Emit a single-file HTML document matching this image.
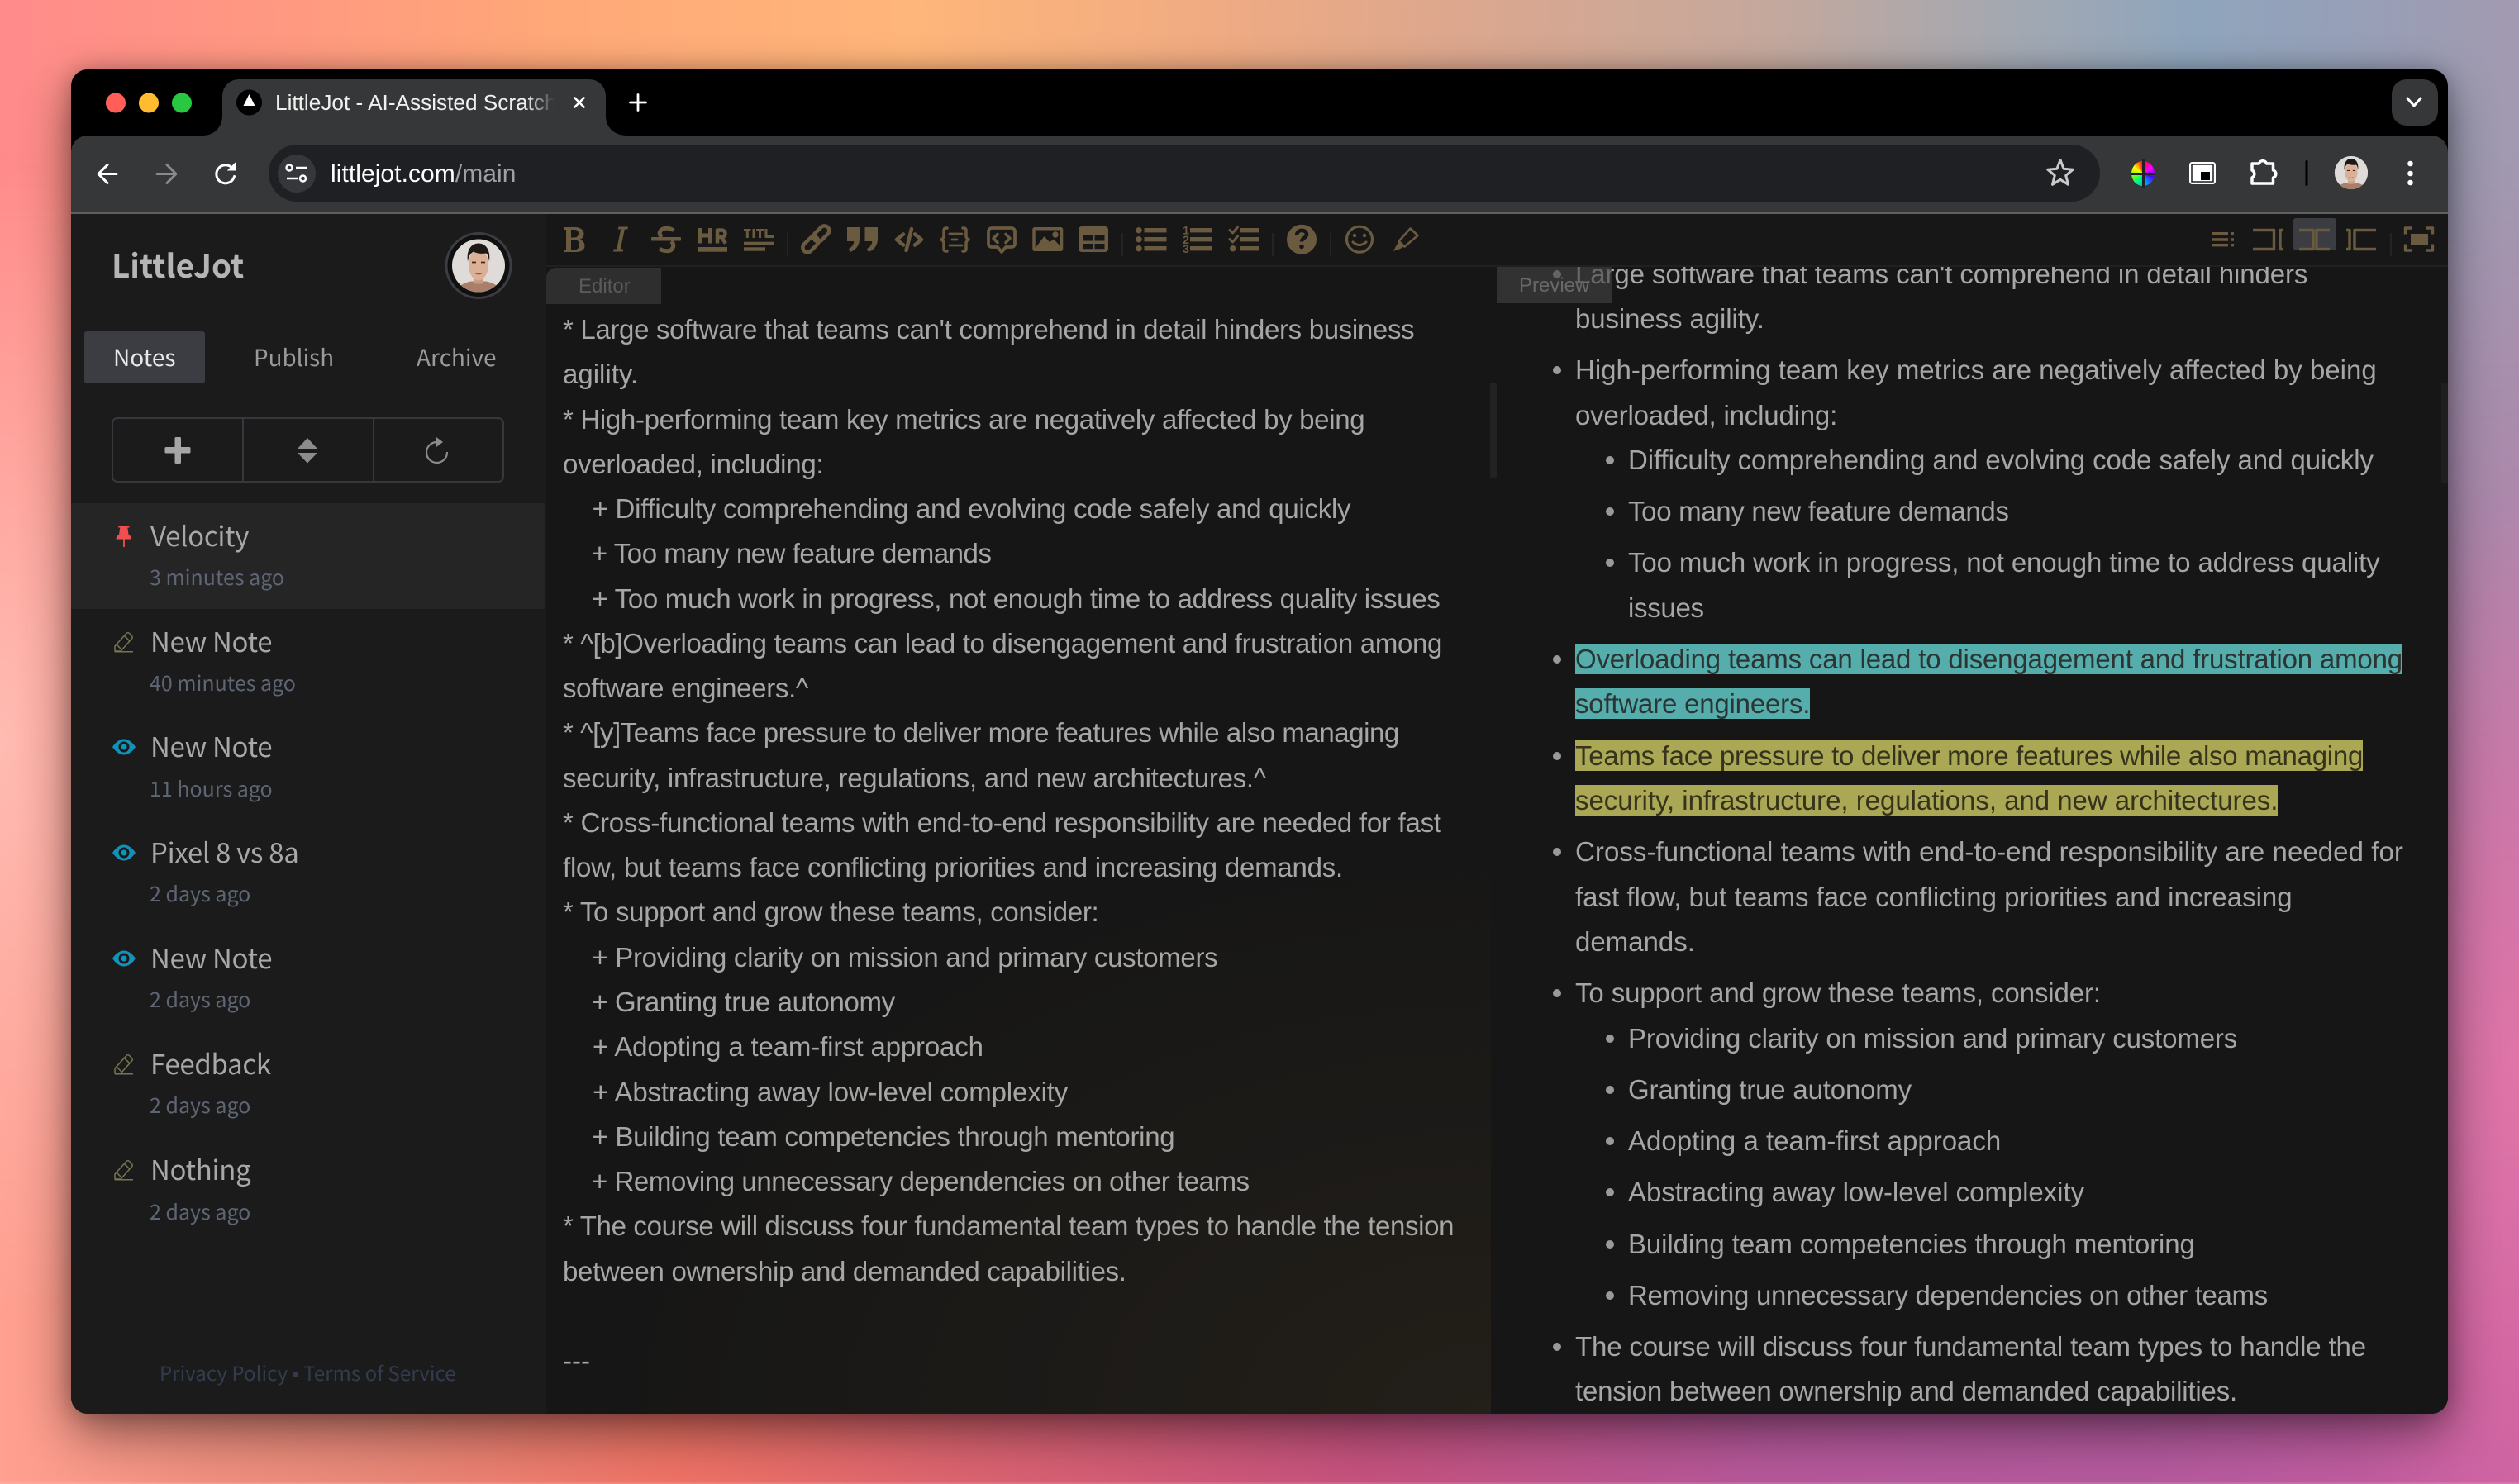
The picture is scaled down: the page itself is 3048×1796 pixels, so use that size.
<!DOCTYPE html>
<html lang="en"><head><meta charset="utf-8"><title>LittleJot - AI-Assisted Scratchpad</title>
<style>
html,body{margin:0;padding:0;width:3048px;height:1796px;overflow:hidden;background:#e88}
*{box-sizing:border-box}
.bg,.bg2,.bg3{position:absolute;left:0;top:0;width:3048px;height:1796px}
.bg{background:linear-gradient(90deg,#ff8b8b 0%,#ff9a80 12%,#ffa878 22%,#ffb67a 36%,#f0ab82 48%,#dca78e 58%,#c5a89c 70%,#a3a8b2 80%,#8fa5bc 87%,#96a0b8 93%,#a29ab0 100%)}
.bg2{background:linear-gradient(90deg,#ffa090 0%,#f09080 8%,#e98878 15%,#ee7265 27%,#dc6470 38%,#c5527e 54%,#b5589a 70%,#b45a9e 85%,#c75ea0 100%);-webkit-mask-image:linear-gradient(180deg,transparent 10%,#000 90%);mask-image:linear-gradient(180deg,transparent 10%,#000 90%)}
.bg3{background:radial-gradient(ellipse 260px 700px at 0 50%,rgba(255,200,190,.75),rgba(255,200,190,0)),radial-gradient(ellipse 260px 700px at 100% 72%,rgba(232,118,168,.8),rgba(232,118,168,0))}
.win{position:absolute;left:86px;top:84px;width:2876px;height:1627px;border-radius:20px;overflow:hidden;background:#000;box-shadow:0 22px 60px rgba(0,0,0,.48),0 0 24px rgba(0,0,0,.22)}
.in{position:absolute;left:-86px;top:-84px;width:3048px;height:1796px}
.a{position:absolute;white-space:nowrap}
.lib{font-family:"Liberation Sans",Arial,sans-serif}
.s{font-family:"Noto Sans CJK JP","DejaVu Sans",sans-serif}
svg{position:absolute;left:0;top:0;overflow:visible}
.bar{left:86px;top:164px;width:2876px;height:92px;background:#363738;border-radius:20px 20px 0 0}
.line{left:86px;top:256px;width:2876px;height:3px;background:#606060}
.omni{left:325px;top:175px;width:2216px;height:69px;border-radius:35px;background:#1f2023}
.side{left:86px;top:259px;width:575px;height:1452px;background:#1b1b1b}
.main{left:661px;top:259px;width:2301px;height:1452px;background:#161616}
.edit{left:661px;top:322px;width:1143px;height:1389px;background:radial-gradient(ellipse 1100px 700px at 100% 100%,#231f19,rgba(35,31,25,0)),#161616;border-radius:0 0 0 10px}
.tb{left:661px;top:259px;width:2301px;height:64px;background:#171717;border-bottom:2px solid #202020}
.etxt{left:681px;top:372px;font-size:33px;line-height:54.27px;color:#a6a6a6;white-space:pre}
.prev{position:absolute;left:1804px;top:323px;width:1158px;height:1388px;overflow:hidden}
.prev ul{list-style:none;margin:0;padding:0}
.prev>ul{position:absolute;left:102px;top:-18.4px;font-size:33px;line-height:54.4px;color:#a6a6a6;white-space:nowrap}
.prev ul ul{padding-left:64px}
.prev li{position:relative;margin-bottom:7.8px}
.prev li:before{content:"";position:absolute;left:-27px;top:22px;width:10px;height:10px;border-radius:50%;background:#9a9a9a}
.t{background:#55adac;color:#2c3434}
.y{background:#aaa755;color:#35331c}
.tag{position:absolute;font-size:24px;line-height:46px;height:44px}
.ti{font-size:33px;letter-spacing:-.3px;line-height:50px;color:#a8a8a8;left:182px}
.tm{font-size:25px;line-height:36px;color:#5e6574;left:181px}
.ic{fill:#6a5a3f}
.st{fill:none;stroke:#6a5a3f;stroke-linecap:round;stroke-linejoin:round}
</style></head><body>
<div class="bg"></div><div class="bg2"></div><div class="bg3"></div>
<div class="a" style="left:0;top:1794px;width:3048px;height:2px;background:rgba(255,255,255,.12)"></div>
<div class="win"><div class="in">

<div class="a bar"></div>
<div class="a line"></div>
<div class="a omni"></div>

<svg width="3048" height="260" viewBox="0 0 3048 260">
<defs>
<clipPath id="cf"><circle cx="0" cy="0" r="32"/></clipPath>
<g id="face" clip-path="url(#cf)">
<rect x="-32" y="-32" width="64" height="64" fill="#dedbd8"/>
<path d="M-26 32c1-8 8-11 17-13h18c9 2 16 5 17 13z" fill="#a97f6a"/>
<rect x="-6" y="8" width="12" height="14" fill="#c89c82"/>
<ellipse cx="0" cy="-1" rx="12" ry="19" fill="#dcb096"/>
<path d="M-13-5c-2-15 5-22 13-22s15 7 13 22c-1-6-2-9-4-10-6 1-12 0-15-2-4 2-6 6-7 12z" fill="#1f1916"/>
<path d="M-8-4h5M3-4h5" stroke="#3a2a22" stroke-width="1.800"/>
<path d="M-4 9q4 2.500 8 0" stroke="#8f5b4a" stroke-width="1.500" fill="none"/>
</g>
</defs>
<!-- tab -->
<path d="M245 164c14 0 24-10 24-24V116a20 20 0 0 1 20-20H713a20 20 0 0 1 20 20V140c0 14 10 24 26 24z" fill="#363738"/>
<circle cx="140" cy="124.500" r="12" fill="#ff5f57"/><circle cx="180" cy="124.500" r="12" fill="#febc2e"/><circle cx="220" cy="124.500" r="12" fill="#28c840"/>
<circle cx="301.500" cy="124" r="15.500" fill="#000"/><path d="M301.500 114l7 14h-14z" fill="#fff"/>
<path d="M695.500 118.500l11 11M706.500 118.500l-11 11" stroke="#fff" stroke-width="2.600" stroke-linecap="round"/>
<path d="M772 114.500v19M762.500 124h19" stroke="#fff" stroke-width="2.800" stroke-linecap="round"/>
<rect x="2894" y="96" width="56" height="56" rx="18" fill="#363738"/>
<path d="M2913 119l8 9 8-9" fill="none" stroke="#fff" stroke-width="3" stroke-linecap="round" stroke-linejoin="round"/>
<!-- nav -->
<g fill="none" stroke-linecap="round" stroke-linejoin="round" stroke-width="3">
<path d="M141 210.500H120M130 199.500l-11 11 11 11" stroke="#fff"/>
<path d="M190 210.500H212M202 199.500l11 11-11 11" stroke="#8a8a8a"/>
<path d="M281.500 204a11 11 0 1 0 2 9.500" stroke="#fff"/>
</g>
<path d="M276 206h9v-9z" fill="#fff" stroke="#fff" stroke-width="1"/>
<circle cx="359" cy="210" r="23" fill="#36373a"/>
<g fill="none" stroke="#fff" stroke-width="2.400">
<circle cx="350" cy="203" r="3.500"/><path d="M358 203h13M347 216h13"/><circle cx="366.500" cy="216" r="3.500"/></g>
<path d="M2493 193.500l4.100 10.800 11.100.9-8.500 7.200 2.800 10.900-9.500-6-9.500 6 2.800-10.900-8.500-7.200 11.100-.9z" fill="none" stroke="#c9c9c9" stroke-width="3" stroke-linejoin="round"/>
<!-- ext -->
<rect x="2649.500" y="196.500" width="31" height="26" rx="3" fill="#fff" stroke="#fff"/>
<rect x="2652" y="199" width="26" height="21" fill="none" stroke="#1d1d1d" stroke-width="1.500"/>
<rect x="2663" y="208" width="11" height="10" fill="#000"/>
<path d="M2725 222v-7a5 5 0 0 0 0-9v-8h8.500a4.700 4.700 0 0 1 9 0h8v8a4.700 4.700 0 0 1 0 9v7z" fill="none" stroke="#fff" stroke-width="3.500" stroke-linejoin="round"/>
<rect x="2789.500" y="194" width="3" height="31" rx="1.500" fill="#000"/>
<g transform="translate(2845 209) scale(.63)"><use href="#face"/></g>
<g fill="#fff"><circle cx="2916.500" cy="198" r="3.300"/><circle cx="2916.500" cy="210" r="3.300"/><circle cx="2916.500" cy="221" r="3.300"/></g>
</svg>
<div class="a" style="left:2579px;top:195px;width:28px;height:30px;border-radius:50%;background:conic-gradient(#ff0040,#ff00ff 15%,#5000ff 30%,#00a0ff 45%,#00ff80 60%,#80ff00 72%,#ffff00 85%,#ff8000 93%,#ff0040)"></div>
<div class="a" style="left:2578px;top:208.500px;width:30px;height:3px;background:#222"></div>
<div class="a" style="left:2591.500px;top:193px;width:3px;height:34px;background:#222"></div>

<div class="a lib" style="left:333px;top:104px;width:338px;height:40px;overflow:hidden;font-size:26.200px;line-height:40px;color:#f0f0f0;-webkit-mask-image:linear-gradient(90deg,#000 90%,transparent 100%);mask-image:linear-gradient(90deg,#000 90%,transparent 100%)">LittleJot - AI-Assisted Scratchpad</div>
<div class="a lib" style="left:400px;top:190px;font-size:30px;letter-spacing:.06px;line-height:42px;color:#fff">littlejot.com<span style="color:#a0a0a0">/main</span></div>

<!-- content frames -->
<div class="a main"></div>
<div class="a edit"></div>
<div class="a side"></div>
<div class="a tb"></div>

<!-- sidebar -->
<div class="a s" style="left:135px;top:290px;font-size:38.500px;line-height:60px;font-weight:700;color:#b5b5b5">LittleJot</div>
<div class="a" style="left:102px;top:401px;width:146px;height:63px;background:#3c3d42;border-radius:3px"></div>
<div class="a s" style="left:137px;top:410px;font-size:28px;line-height:44px;color:#e8e8e8">Notes</div>
<div class="a s" style="left:307px;top:410px;font-size:27.800px;line-height:44px;color:#9a9a9a">Publish</div>
<div class="a s" style="left:504px;top:410px;font-size:28px;line-height:44px;color:#9a9a9a">Archive</div>
<div class="a" style="left:135px;top:505px;width:475px;height:79px;border:2.500px solid #37383d;border-radius:7px"></div>
<div class="a" style="left:292.500px;top:505px;width:2.500px;height:79px;background:#37383d"></div>
<div class="a" style="left:450.500px;top:505px;width:2.500px;height:79px;background:#37383d"></div>
<div class="a" style="left:86px;top:609px;width:573px;height:128px;background:#252525"></div>
<svg width="700" height="1600" viewBox="0 0 700 1600">
<defs>
<g id="pen"><path d="M139 788v-6L153 766.500a2.500 2.500 0 0 1 3.500 0l3 3a2.500 2.500 0 0 1 0 3.500L146 788zM150.500 769.500l6.500 6.500M141 780l6 6M139 788.800h22" fill="none" stroke="#7a7653" stroke-width="1.500"/></g>
<g id="eye"><path d="M136 904c4-6 9-9.500 14-9.500s10 3.500 14 9.500c-4 6-9 9.500-14 9.500s-10-3.500-14-9.500z" fill="#1192b8"/><circle cx="150" cy="904" r="6.500" fill="#1b1b1b"/><circle cx="150" cy="904" r="3.500" fill="#1192b8"/></g>
</defs>
<circle cx="579" cy="321.500" r="39" fill="#101010" stroke="#3c3c44" stroke-width="3"/>
<g transform="translate(579 321.500)"><use href="#face"/></g>
<rect x="211.500" y="529" width="7.500" height="32" rx="1.500" fill="#a5a5a5"/><rect x="199.500" y="541" width="31" height="7.500" rx="1.500" fill="#a5a5a5"/>
<path d="M372 530l12 13h-24zM360 548h24l-12 12.500z" fill="#8c8c8c"/>
<path d="M541 547a12.500 12.500 0 1 1-12.500-12" fill="none" stroke="#8c8c8c" stroke-width="2.200"/>
<path d="M528 529v12l8-6z" fill="#8c8c8c"/>
<path d="M143.500 636h13v2.500h-2.200l1.300 8.500c2 1 3.400 3 3.500 5.500h-8.200v9.500h-1.800v-9.500h-8.600c.1-2.500 1.500-4.500 3.500-5.500l1.300-8.500h-2.200z" fill="#f04f4f"/>
<use href="#pen"/><use href="#eye"/><use href="#eye" y="128"/><use href="#eye" y="256"/><use href="#pen" y="511"/><use href="#pen" y="639"/>
</svg>
<div class="a s ti" style="top:622px">Velocity</div><div class="a s tm" style="top:680px">3 minutes ago</div>
<div class="a s ti" style="top:750px">New Note</div><div class="a s tm" style="top:808px">40 minutes ago</div>
<div class="a s ti" style="top:877px">New Note</div><div class="a s tm" style="top:936px">11 hours ago</div>
<div class="a s ti" style="top:1005px">Pixel 8 vs 8a</div><div class="a s tm" style="top:1063px">2 days ago</div>
<div class="a s ti" style="top:1133px">New Note</div><div class="a s tm" style="top:1191px">2 days ago</div>
<div class="a s ti" style="top:1261px">Feedback</div><div class="a s tm" style="top:1319px">2 days ago</div>
<div class="a s ti" style="top:1389px">Nothing</div><div class="a s tm" style="top:1448px">2 days ago</div>
<div class="a s" style="left:193px;top:1643px;font-size:24px;letter-spacing:.06px;line-height:36px;color:#323c4e">Privacy Policy • Terms of Service</div>

<!-- editor -->
<div class="a lib etxt"><span style="letter-spacing:-.33px">* Large software that teams can't comprehend in detail hinders business</span>
<span>agility.</span>
<span style="letter-spacing:-.32px">* High-performing team key metrics are negatively affected by being</span>
<span style="letter-spacing:-.26px">overloaded, including:</span>
<span style="letter-spacing:-.26px">    + Difficulty comprehending and evolving code safely and quickly</span>
<span style="letter-spacing:-.46px">    + Too many new feature demands</span>
<span style="letter-spacing:-.31px">    + Too much work in progress, not enough time to address quality issues</span>
<span style="letter-spacing:-.32px">* ^[b]Overloading teams can lead to disengagement and frustration among</span>
<span style="letter-spacing:-.32px">software engineers.^</span>
<span style="letter-spacing:-.44px">* ^[y]Teams face pressure to deliver more features while also managing</span>
<span style="letter-spacing:-.27px">security, infrastructure, regulations, and new architectures.^</span>
<span style="letter-spacing:-.26px">* Cross-functional teams with end-to-end responsibility are needed for fast</span>
<span style="letter-spacing:-.23px">flow, but teams face conflicting priorities and increasing demands.</span>
<span style="letter-spacing:-.3px">* To support and grow these teams, consider:</span>
<span style="letter-spacing:-.31px">    + Providing clarity on mission and primary customers</span>
<span style="letter-spacing:-.36px">    + Granting true autonomy</span>
<span style="letter-spacing:-.16px">    + Adopting a team-first approach</span>
<span style="letter-spacing:-.14px">    + Abstracting away low-level complexity</span>
<span style="letter-spacing:-.29px">    + Building team competencies through mentoring</span>
<span style="letter-spacing:-.43px">    + Removing unnecessary dependencies on other teams</span>
<span style="letter-spacing:-.34px">* The course will discuss four fundamental team types to handle the tension</span>
<span style="letter-spacing:-.31px">between ownership and demanded capabilities.</span>

---</div>
<div class="a lib tag" style="left:661px;top:324px;width:139px;background:#2e2e2e;color:#5a5a5a;border-radius:12px 0 0 0;padding-left:39px">Editor</div>

<!-- preview -->
<div class="prev lib"><ul>
<li><span style="letter-spacing:-.1px">Large software that teams can't comprehend in detail hinders</span><br><span style="letter-spacing:-.1px">business agility.</span></li>
<li>High-performing team key metrics are negatively affected by being<br><span style="letter-spacing:-.18px">overloaded, including:</span>
<ul><li><span style="letter-spacing:-.06px">Difficulty comprehending and evolving code safely and quickly</span></li><li><span style="letter-spacing:-.32px">Too many new feature demands</span></li><li><span style="letter-spacing:-.125px">Too much work in progress, not enough time to address quality</span><br><span style="letter-spacing:-.3px">issues</span></li></ul></li>
<li><span class="t"><span style="letter-spacing:-.18px">Overloading teams can lead to disengagement and frustration among</span><br><span style="letter-spacing:-.2px">software engineers.</span></span></li>
<li><span class="y"><span style="letter-spacing:-.27px">Teams face pressure to deliver more features while also managing</span><br><span style="letter-spacing:-.03px">security, infrastructure, regulations, and new architectures.</span></span></li>
<li><span style="letter-spacing:.06px">Cross-functional teams with end-to-end responsibility are needed for</span><br>fast flow, but teams face conflicting priorities and increasing<br>demands.</li>
<li><span style="letter-spacing:-.1px">To support and grow these teams, consider:</span>
<ul><li><span style="letter-spacing:-.15px">Providing clarity on mission and primary customers</span></li><li><span style="letter-spacing:-.17px">Granting true autonomy</span></li><li>Adopting a team-first approach</li><li><span style="letter-spacing:-.05px">Abstracting away low-level complexity</span></li><li><span style="letter-spacing:-.09px">Building team competencies through mentoring</span></li><li><span style="letter-spacing:-.31px">Removing unnecessary dependencies on other teams</span></li></ul></li>
<li><span style="letter-spacing:-.15px">The course will discuss four fundamental team types to handle the</span><br><span style="letter-spacing:-.19px">tension between ownership and demanded capabilities.</span></li>
</ul></div>
<div class="a lib tag" style="left:1811px;top:323px;width:139px;background:rgba(68,68,68,.62);color:#686868;padding-left:27px">Preview</div>

<!-- scroll hints -->
<div class="a" style="left:1803px;top:464px;width:8px;height:114px;background:#222"></div>
<div class="a" style="left:2954px;top:463px;width:8px;height:121px;background:#1e1e1e"></div>
<div class="a" style="left:2775px;top:264px;width:52px;height:39px;background:#3b3d42;border-radius:3px"></div>

<!-- editor toolbar icons -->
<svg width="3048" height="330" viewBox="0 0 3048 330">
<g class="ic">
<path fill-rule="evenodd" d="M682 275h13.500c7 0 11 3.400 11 8 0 3.500-2 6-5 7 4 1 6 4 6 7.500 0 5-4 7.500-11 7.500H682v-3h3v-24h-3zM691 278v9.500h4c3 0 5-2 5-5s-2-4.500-5-4.500zM691 290.500v11.500h5c3 0 5-2 5-5.700s-2-5.800-5-5.800z"/>
<path d="M748.500 274.500H760l-.7 3h-3.500l-5 24h3.500l-.6 3H742l.6-3h3.600l5-24h-3.500z"/>
<rect x="788" y="287" width="36" height="4.500" rx="1"/>
</g>
<g class="st" stroke-width="5" style="stroke-linecap:butt">
<path d="M815 279C811 275.500 803 275.500 800 278.500 797 281 798 285 801 287M798 301C803 304.500 811 304.500 813 301.500 816 298 815 294 812 292"/>
<path d="M847.500 276v18.500M859.500 276v18.500M847.500 285h12"/>
<path d="M868 294.500V278.500h5c6 0 6 8.500 0 8.500h-5M873 287l5 7.500" stroke-width="4.500"/>
<g stroke-width="3"><path d="M900 278.500h8.500M904.300 278.500V288M912 277v11M915 278.500h9M919.500 278.500V288M927 277v9.500h9"/></g>
</g>
<g class="ic">
<rect x="844" y="299" width="36" height="5.700"/>
<rect x="900" y="292.700" width="36" height="4"/><rect x="900" y="299.300" width="26" height="4.400"/>
<path d="M1025 275h15v14c0 8-4 13-11 16l-2-4c4-2 6-5 6.300-9H1025zM1046.500 275h15.500v14c0 8-4 13-11 16l-2-4c4-2 6-5 6.300-9h-8.800z"/>
</g>
<g class="st" stroke-width="4.500">
<rect x="970" y="290" width="22" height="11.500" rx="5.700" transform="rotate(-45 981 296)"/>
<rect x="983" y="277" width="22" height="11.500" rx="5.700" transform="rotate(-45 994 283)"/>
</g>
<g class="st" stroke-width="4.500">
<path d="M1093 283.500l-8 6.500 8 6.500M1107 283.500l8 6.500-8 6.500M1103 277l-6.500 26"/>
</g>
<g class="st" stroke-width="3.500">
<path d="M1146 276h-1c-2 0-3 1-3 3v7c0 2-2 3.500-3 4 1 .5 3 2 3 4v7c0 2 1 3 3 3h1M1165 276h1c2 0 3 1 3 3v7c0 2 2 3.500 3 4-1 .5-3 2-3 4v7c0 2-1 3-3 3h-1"/>
<path d="M1149 283h15M1152 290h6M1149 297h15" stroke-width="2.800"/>
<path d="M1200 276h24a4 4 0 0 1 4 4v15a4 4 0 0 1-4 4h-7l-5 6-5-6h-7a4 4 0 0 1-4-4v-15a4 4 0 0 1 4-4z" stroke-width="3.800"/>
<path d="M1207 283.500l-5 5 5 5M1217 283.500l5 5-5 5"/>
<rect x="1251" y="276.800" width="33.500" height="25.500" rx="1" stroke-width="3.500"/>
</g>
<g class="ic">
<path d="M1252 301l11.500-15 6.500 7 5-3.500 9 9.500v2z"/><circle cx="1277" cy="284" r="3.700"/>
<path fill-rule="evenodd" d="M1309 274h28a4 4 0 0 1 4 4v23a4 4 0 0 1-4 4h-28a4 4 0 0 1-4-4v-23a4 4 0 0 1 4-4zM1311 284v7.500h11V284zM1324.500 284v7.500h12V284zM1311 295v6.200h11V295zM1324.500 295v6.200h12V295z"/>
<circle cx="1378" cy="278.700" r="3.700"/><circle cx="1378" cy="289.700" r="3.700"/><circle cx="1378" cy="300.700" r="3.700"/>
<rect x="1384.500" y="276" width="27" height="5.400"/><rect x="1384.500" y="287" width="27" height="5.400"/><rect x="1384.500" y="298" width="27" height="5.400"/>
<rect x="1440" y="276" width="27" height="5.400"/><rect x="1440" y="287" width="27" height="5.400"/><rect x="1440" y="298" width="27" height="5.400"/>
<rect x="1501" y="276" width="22.500" height="5.400"/><rect x="1501" y="287" width="22.500" height="5.400"/><rect x="1501" y="298" width="22.500" height="5.400"/>
<circle cx="1491.700" cy="300.700" r="3.700"/>
<circle cx="1575" cy="289.700" r="18"/>
</g>
<g fill="#6a5a3f" font-family="Liberation Sans" font-weight="700" font-size="14" text-anchor="middle"><text x="1435" y="283.500">1</text><text x="1435" y="295">2</text><text x="1435" y="306">3</text></g>
<path d="M1488 278.500l3.500 3.500 6-7M1488 289.500l3.500 3.500 6-7" class="st" stroke-width="3"/>
<path d="M1569 285c0-8 12-8 12-1 0 4-6 4-6 8.500" fill="none" stroke="#171717" stroke-width="4.500"/><circle cx="1575" cy="298.500" r="2.800" fill="#171717"/>
<circle cx="1645" cy="289.700" r="15.500" class="st" stroke-width="3.200"/>
<circle cx="1639" cy="285" r="2.200" class="ic"/><circle cx="1651" cy="285" r="2.200" class="ic"/>
<path d="M1637 293q8 7 16 0" class="st" stroke-width="3"/>
<path d="M1706.500 276.500l9 8.500-16 13.500-7-6.500z" class="st" stroke-width="2.600"/><path d="M1692.500 293l5.500 5.500-3.500 2.500-8.500 3 3-6z" class="ic"/>
<g stroke="#242424" stroke-width="2"><path d="M953 282v28M1358 282v28M1540 282v28M1610 282v28M2893 282v28"/></g>
<!-- right toolbar -->
<g class="st" stroke-width="3.400" style="stroke-linecap:butt">
<path d="M2676 282.700h20M2676 290h20M2676 296.700h20M2699 282.700h4M2699 290h4M2699 296.700h4"/>
<path d="M2726 278.500h25.500v23H2726M2763 278.500h-4v23h4"/>
<path d="M2782 278.500h17v23h-17M2819 278.500h-16v23h16"/>
<path d="M2839 278.500h4v23h-4M2875 278.500h-26v23h26"/>
<path d="M2918 276h-7.500v7.500M2936 276h7.500v7.500M2918 303h-7.500v-7.500M2936 303h7.500v-7.500"/>
</g>
<rect x="2917" y="283" width="21" height="14" class="ic"/>
</svg>
</div></div>
</body></html>
